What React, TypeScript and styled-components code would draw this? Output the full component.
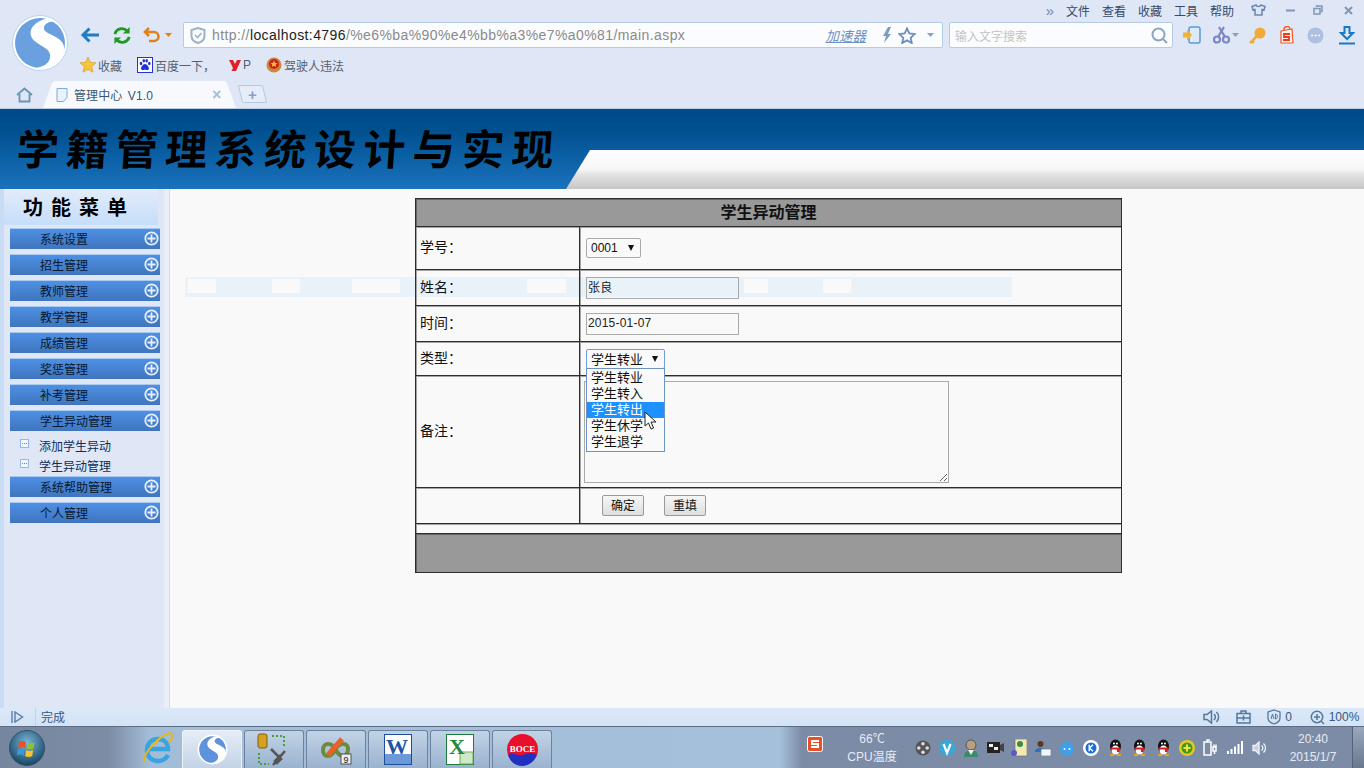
import React from "react";
import styled, { createGlobalStyle } from "styled-components";

const FONT = `"Liberation Sans", "Noto Sans CJK SC", sans-serif`;

const Global = createGlobalStyle`
  html, body { margin: 0; padding: 0; background: #f9f9f9; overflow: hidden; }
  * { box-sizing: border-box; }
  body { font-family: ${FONT}; }
`;

const Page = styled.div`
  width: 1364px; height: 768px; display: flex; flex-direction: column; overflow: hidden;
`;

/* ---------- browser chrome ---------- */
const Chrome = styled.header`
  height: 109px; background: #dfe7f6; display: flex; flex-direction: column; flex: none;
  border-bottom: 1px solid #b9cde8;
`;
const TopMenu = styled.div`
  height: 20px; display: flex; justify-content: flex-end; align-items: center; flex: none;
`;
const TopItem = styled.div<{ $w: number }>`
  width: ${(p) => p.$w}px; display: flex; justify-content: center; align-items: center;
  font-size: 12px; color: #36486a; height: 20px;
`;
const Chevrons = styled(TopItem)` font-size: 15px; color: #6d88ad; `;
const HeadRow = styled.div`
  display: flex; height: 60px; flex: none;
`;
const LogoCol = styled.div`
  width: 76px; padding-left: 12px; margin-top: -5px; flex: none;
`;
const HeadMain = styled.div`
  flex: 1; display: flex; flex-direction: column;
`;
const Toolbar = styled.div`
  height: 30px; display: flex; align-items: center; padding-left: 4px;
`;
const NavSlot = styled.div<{ $w: number; $ml?: number }>`
  width: ${(p) => p.$w}px; margin-left: ${(p) => p.$ml ?? 0}px; display: flex;
  justify-content: center; align-items: center; flex: none;
`;
const Address = styled.div`
  width: 760px; height: 26px; margin-left: 11px; background: #fbfcfe; border: 1px solid #b6cae3;
  border-radius: 2px; display: flex; align-items: center; padding-left: 6px; flex: none;
`;
const Url = styled.div`
  margin-left: 6px; font-size: 14px; color: #8a8a8a; white-space: nowrap; flex: 1;
  font-family: "Liberation Sans", sans-serif; letter-spacing: 0.41px;
`;
const UrlHost = styled.span` color: #222; `;
const Accel = styled.span`
  font-size: 13.5px; font-style: italic; color: #6f92c4; text-decoration: underline;
  text-decoration-thickness: 1px; margin-right: 12px;
`;
const Search = styled.div`
  width: 224px; height: 26px; margin-left: 6px; background: #fbfcfe; border: 1px solid #b6cae3;
  border-radius: 2px; display: flex; align-items: center; padding: 0 4px 0 5px; flex: none;
  justify-content: space-between; font-size: 12px; color: #c4c4c4;
`;
const Bookmarks = styled.div`
  height: 30px; display: flex; align-items: center; padding-left: 4px;
`;
const Bookmark = styled.div<{ $ml?: number }>`
  display: flex; align-items: center; gap: 2px; margin-left: ${(p) => p.$ml ?? 0}px;
  font-size: 12px; color: #556070; white-space: nowrap;
`;
const TabsRow = styled.div`
  height: 28px; display: flex; align-items: flex-end; flex: none;
`;
const HomeSlot = styled.div`
  width: 36px; margin-left: 6px; height: 26px; display: flex; align-items: center; justify-content: center; flex: none;
`;
const Tab = styled.div`
  width: 193px; height: 27px; margin-left: 1px; background: #f7f9fd; display: flex; align-items: center;
  clip-path: polygon(0 100%, 9px 2px, 11px 0, calc(100% - 11px) 0, calc(100% - 9px) 2px, 100% 100%);
  padding-left: 13px; font-size: 12px; color: #3a5674; flex: none;
`;
const TabTitle = styled.span` margin-left: 6px; flex: 1; word-spacing: 2px; letter-spacing: 0.1px; `;
const TabClose = styled.span`
  width: 24px; font-size: 16px; font-weight: bold; color: #a9bdd6; line-height: 1; font-family: "Liberation Sans", sans-serif;
`;
const NewTab = styled.div`
  width: 25px; height: 18px; margin: 0 0 5px 4px; border: 1px solid #b5c8e2; background: #e6edf9;
  transform: skewX(14deg); display: flex; align-items: center; justify-content: center;
  color: #86a0c6; font-size: 15px; font-weight: bold; line-height: 1; font-family: "Liberation Sans", sans-serif;
  border-radius: 2px;
`;
const NewTabPlus = styled.span` transform: skewX(-14deg); `;

/* ---------- banner ---------- */
const Banner = styled.div`
  position: relative; height: 80px; flex: none; display: flex; align-items: center; padding: 0 0 5px 17px;
  background: linear-gradient(#004a8a 0%, #00508f 25%, #1a72bd 100%);
  border-top: 1px solid #0e4f84;
`;
const BannerSweep = styled.div`
  position: absolute; left: 566px; right: 0; top: 40px; bottom: 0;
  background: linear-gradient(#ffffff, #f6f6f6 50%, #e4e4e4 62%, #c6c6c6 100%);
  clip-path: polygon(24px 0, 100% 0, 100% 100%, 0 100%);
`;
const BannerTitle = styled.h1`
  margin: 0; font-family: "Noto Sans CJK SC", sans-serif; font-weight: 700; font-size: 42px; line-height: 1;
  color: #000; letter-spacing: 7.5px; transform: skewX(-4deg); white-space: nowrap;
`;

/* ---------- body ---------- */
const Body = styled.div`
  flex: 1; display: flex; min-height: 0;
`;
const Sidebar = styled.nav`
  width: 170px; flex: none; display: flex; flex-direction: column;
  background: linear-gradient(90deg, #c8dcf4 0 4px, #dfe7f6 4px 164px, #e9effa 164px 169px, #d4dce8 169px 170px);
`;
const MenuTitle = styled.div`
  height: 36px; width: 154px; margin-left: 4px; flex: none; display: flex; align-items: center; padding: 0 0 2px 19px;
  background: linear-gradient(#e3ecf9, #c5def9);
  font-family: "Noto Sans CJK SC", sans-serif; font-weight: 700; font-size: 20px; color: #000; letter-spacing: 8px;
`;
const MenuList = styled.div`
  padding: 3px 0 0 10px; display: flex; flex-direction: column; gap: 5px;
`;
const MenuItem = styled.div`
  width: 150px; height: 21px; padding: 0 1px 2px 30px; display: flex; align-items: center; justify-content: space-between;
  font-size: 12px; color: #08172e; border-top: 1px solid #a9c9f0;
  background: linear-gradient(#4e90e4, #3e75bd);
`;
const SubList = styled.div`
  margin: -5px 0; padding-top: 5px; display: flex; flex-direction: column;
`;
const SubItem = styled.div`
  height: 20px; display: flex; align-items: center; padding: 0 0 2px 10px; gap: 10px; font-size: 12px; color: #0c2c5c;
`;
const SubIcon = styled.span`
  width: 9px; height: 9px; border: 1px solid #8fbbee; background: #f3f8ff; display: block; position: relative; flex: none;
  margin-top: -3px;
  &::after { content: ""; position: absolute; left: 1px; right: 1px; top: 3px; border-top: 1px dotted #3d8be0; }
`;

const Main = styled.main`
  flex: 1; position: relative; background: #f9f9f9; padding: 9px 0 0 245px;
`;
const Ghost = styled.div`
  position: absolute; left: 15px; top: 88px; width: 827px; height: 20px; background: #e9f1f9; display: flex;
`;
const GhostPart = styled.span<{ $w: number; $gap?: boolean }>`
  width: ${(p) => p.$w}px; height: 14px; margin-top: 2px; flex: none;
  background: ${(p) => (p.$gap ? "#f9f9f9" : "transparent")};
`;
const FormTable = styled.table`
  position: relative; width: 707px; border-collapse: collapse; table-layout: fixed; font-size: 14px; color: #111;
`;
const LabelCol = styled.col` width: 164px; `;
const Row = styled.tr<{ $h: number }>` height: ${(p) => p.$h}px; `;
const Cell = styled.td`
  border: 1px solid #2e2e2e; box-shadow: inset 1px 1px 0 #a4a4a4; padding: 0;
`;
const Label = styled(Cell)`
  padding: 0 0 4px 4px; vertical-align: middle;
`;
const Value = styled(Cell)`
  padding: 0 0 0 6px; vertical-align: middle; position: relative;
`;
const HeadCell = styled(Cell)`
  background: #999; text-align: center; font-weight: bold; font-size: 16px; padding-bottom: 3px;
  box-shadow: inset 1px 1px 0 #666;
`;
const FootCell = styled(Cell)`
  background: #999; box-shadow: inset 1px 1px 0 #666;
`;
const SelectBox = styled.div<{ $w: number; $focus?: boolean }>`
  width: ${(p) => p.$w}px; height: 20px; border: 1px solid ${(p) => (p.$focus ? "#6f9fd8" : "#aaa")}; border-radius: 2px;
  background: #f9f9f9; display: flex; align-items: center; justify-content: space-between; padding: 0 6px 0 4px;
  font-size: 12px; color: #111;
`;
const SelectCjk = styled(SelectBox)` font-size: 13px; `;
const Arrow = styled.span`
  width: 0; height: 0; border-left: 3.5px solid transparent; border-right: 3.5px solid transparent; border-top: 6px solid #111;
`;
const TextInput = styled.input`
  display: block; width: 153px; height: 22px; border: 1px solid #aaa; background: transparent; padding: 0 1px 2px;
  font-family: ${FONT}; font-size: 12px; color: #222; outline: none; letter-spacing: 0.2px;
`;
const Note = styled.textarea`
  display: block; width: 365px; height: 102px; border: 1px solid #aaa; background: #f9f9f9; margin-left: -2px;
  outline: none; padding: 2px;
`;
const Actions = styled.div`
  display: flex; gap: 20px; padding-left: 16px;
`;
const Btn = styled.button`
  width: 42px; height: 21px; padding: 0 0 2px; border: 1px solid #999; border-radius: 2px; font-family: ${FONT}; font-size: 12px; color: #111;
  background: linear-gradient(#f6f6f6, #dedede);
`;
const DropList = styled.div`
  position: absolute; left: 6px; top: 26px; width: 79px; z-index: 3; border: 1px solid #6d93c2; background: #f9f9f9;
  padding: 1px 0; display: flex; flex-direction: column;
`;
const DropItem = styled.div<{ $on?: boolean }>`
  height: 16px; line-height: 15px; padding-left: 4px; font-size: 13px;
  background: ${(p) => (p.$on ? "#1e90ff" : "transparent")}; color: ${(p) => (p.$on ? "#fff" : "#111")};
`;
const CursorWrap = styled.div`
  position: absolute; left: 57px; top: 42px; z-index: 4; line-height: 0;
`;

/* ---------- status & taskbar ---------- */
const Status = styled.div`
  height: 18px; flex: none; background: linear-gradient(#dbe8f8, #d3e3f5); display: flex; align-items: center; font-size: 12px; color: #34597f;
`;
const StatusPlay = styled.div`
  width: 36px; height: 18px; display: flex; align-items: center; justify-content: center; border-right: 1px solid #c2d4ea; flex: none;
`;
const StatusText = styled.div` margin-left: 5px; flex: 1; padding-bottom: 1px; `;
const StatusTool = styled.div<{ $w: number }>`
  width: ${(p) => p.$w}px; display: flex; align-items: center; justify-content: center; gap: 4px; flex: none; white-space: nowrap;
`;
const Taskbar = styled.footer`
  height: 42px; flex: none; display: flex; align-items: stretch; border-top: 1px solid #5d6d84;
  background: linear-gradient(90deg, #76869f 0, #7d8da6 110px, #a3bdd8 150px, #a5c0da 780px, #7c8ba6 802px, #7c8ba6 100%);
`;
const Orb = styled.div`
  width: 130px; display: flex; align-items: center; padding-left: 9px; flex: none;
`;
const IeSlot = styled.div`
  width: 52px; display: flex; align-items: center; justify-content: center; flex: none; padding-left: 4px;
`;
const TaskBtns = styled.div`
  display: flex; gap: 2px; padding-top: 3px; flex: none;
`;
const TaskBtn = styled.div<{ $on?: boolean }>`
  width: 60px; border: 1px solid ${(p) => (p.$on ? "#eef3fa" : "#6d829e")}; border-bottom: none; border-radius: 3px 3px 0 0;
  background: ${(p) => (p.$on ? "linear-gradient(#e5edf7, #c3d3e6)" : "linear-gradient(#c2d3e6, #99b3cf)")};
  display: flex; align-items: center; justify-content: center;
`;
const ImeSlot = styled.div`
  margin-left: 250px; width: 26px; display: flex; align-items: center; justify-content: center; flex: none; padding-bottom: 8px;
`;
const Temp = styled.div`
  width: 88px; display: flex; flex-direction: column; align-items: center; justify-content: center;
  font-size: 12px; color: #e6ecf4; line-height: 18px; flex: none;
`;
const Tray = styled.div`
  display: flex; align-items: center; margin-left: -5px; flex: none;
`;
const TrayItem = styled.div`
  width: 24px; display: flex; align-items: center; justify-content: center; flex: none;
`;
const Clock = styled.div`
  width: 78px; margin-left: 3px; display: flex; flex-direction: column; align-items: center; justify-content: center;
  font-size: 12px; color: #e6ecf4; line-height: 18px; flex: none;
`;
const ShowDesk = styled.div`
  flex: 1; background: linear-gradient(#9aa8bd, #69788f); border-left: 1px solid #55637a;
`;

/* ---------- drawings ---------- */
const Logo = () => (
  <svg width="56" height="56" viewBox="0 0 56 56">
    <circle cx="28" cy="28" r="27.5" fill="#fff" stroke="#b9d2f0" />
    <circle cx="28" cy="28" r="25" fill="#6a9fe0" />
    <path d="M38 3C24 5 15 14 20 23C25 31 40 32 38 43C37 49 30 52 24 53C40 56 53 45 52 32C51 20 30 20 32 12C33 8 38 6 44 7Z" fill="#fff" />
  </svg>
);
const Back = () => (
  <svg width="20" height="18" viewBox="0 0 20 18" fill="none" stroke="#1f7dc4" strokeWidth="3">
    <path d="M19 9H3M9.5 2.5L3 9l6.5 6.5" />
  </svg>
);
const Reload = () => (
  <svg width="21" height="21" viewBox="0 0 21 21" fill="none" stroke="#1f9a1f" strokeWidth="3">
    <path d="M3 9a7.5 7.5 0 0 1 13-3" /><path d="M18 12a7.5 7.5 0 0 1-13 3" />
    <path d="M18.5 1.5v7h-7z" fill="#1f9a1f" stroke="none" /><path d="M2.5 19.5v-7h7z" fill="#1f9a1f" stroke="none" />
  </svg>
);
const Undo = () => (
  <svg width="18" height="18" viewBox="0 0 18 18" fill="none" stroke="#e08214" strokeWidth="2.6">
    <path d="M6 2L2 6l4 4" /><path d="M2 6h9a4.5 4.5 0 0 1 0 9H6" />
  </svg>
);
const Caret = ({ c = "#8aa0c0" }: { c?: string }) => (
  <svg width="7" height="4" viewBox="0 0 7 4"><path d="M0 0h7L3.5 4z" fill={c} /></svg>
);
const Shield = () => (
  <svg width="16" height="17" viewBox="0 0 16 17" fill="none">
    <path d="M8 1l6.5 2v6c0 3.5-3 6-6.5 7-3.5-1-6.5-3.5-6.5-7V3z" stroke="#9db2c8" strokeWidth="2" />
    <path d="M5 8l2.5 2.5L11.5 6" stroke="#9db2c8" strokeWidth="1.6" />
  </svg>
);
const Bolt = () => (
  <svg width="10" height="16" viewBox="0 0 10 16"><path d="M6 0L1 9h3L2 16l7-9H6l3-7z" fill="#7f9cc4" /></svg>
);
const StarOut = () => (
  <svg width="18" height="17" viewBox="0 0 18 17"><path d="M9 1.5l2.3 5 5.4.6-4 3.7 1.1 5.3L9 13.4l-4.8 2.7 1.1-5.3-4-3.7 5.4-.6z" fill="none" stroke="#6d8fbf" strokeWidth="1.8" /></svg>
);
const Magnifier = () => (
  <svg width="17" height="17" viewBox="0 0 17 17" fill="none" stroke="#8aa6c6" strokeWidth="2"><circle cx="7.5" cy="7.5" r="6" /><path d="M12 12l4 4" /></svg>
);
const PhoneIn = () => (
  <svg width="18" height="18" viewBox="0 0 18 18">
    <rect x="6" y="1" width="11" height="16" rx="2" fill="#dbe9f8" stroke="#5b9bd8" strokeWidth="1.5" />
    <path d="M0 6.5h4V3.5l5 5.5-5 5.5V11.5H0z" fill="#f2b233" />
  </svg>
);
const Scissors = () => (
  <svg width="17" height="18" viewBox="0 0 17 18" fill="none" stroke="#7f86c4" strokeWidth="2.2">
    <circle cx="4" cy="13.5" r="3" /><circle cx="13" cy="13.5" r="3" /><path d="M5 11L11 1M12 11L6 1" />
  </svg>
);
const Key = () => (
  <svg width="17" height="17" viewBox="0 0 17 17">
    <circle cx="11" cy="6" r="5.5" fill="#f0aa35" /><path d="M8 9l-7 7M3 14l2 2" stroke="#f0aa35" strokeWidth="2.5" />
  </svg>
);
const Bag = () => (
  <svg width="15" height="18" viewBox="0 0 15 18">
    <path d="M2 5l11-2 1 14H2z" fill="#fdf3ee" stroke="#ee5a28" strokeWidth="1.2" />
    <path d="M5 4a3 3 0 0 1 6-1" fill="none" stroke="#ee5a28" strokeWidth="1.3" />
    <path d="M11 8H5v3h5v3H4" fill="none" stroke="#ee3a18" strokeWidth="1.8" />
  </svg>
);
const Dots = () => (
  <svg width="17" height="17" viewBox="0 0 17 17">
    <circle cx="8.5" cy="8.5" r="8" fill="#aebfe0" /><circle cx="5" cy="8.5" r="1" fill="#fff" /><circle cx="8.5" cy="8.5" r="1" fill="#fff" /><circle cx="12" cy="8.5" r="1" fill="#fff" />
  </svg>
);
const Download = () => (
  <svg width="16" height="19" viewBox="0 0 16 19" fill="none" stroke="#1a78c8" strokeWidth="2">
    <path d="M5.5 1h5v6h3.5L8 13 2 7h3.5z" /><path d="M0 17.5h16" />
  </svg>
);
const Shirt = () => (
  <svg width="15" height="12" viewBox="0 0 15 12" fill="none" stroke="#6d88ad" strokeWidth="1.5">
    <path d="M5 1L1 2.5 2 6l2-.5V11h7V5.5l2 .5 1-3.5L10 1c-.5 2-4.5 2-5 0z" />
  </svg>
);
const WinMin = () => <svg width="9" height="3" viewBox="0 0 9 3"><path d="M0 1.5h9" stroke="#7f97b8" strokeWidth="2" /></svg>;
const WinMax = () => (
  <svg width="10" height="10" viewBox="0 0 10 10" fill="none" stroke="#7f97b8" strokeWidth="1.5">
    <rect x="1" y="3.5" width="6" height="5.5" /><path d="M3.5 2V1H9v5.5H8" />
  </svg>
);
const WinClose = () => <svg width="9" height="9" viewBox="0 0 9 9"><path d="M1 1l7 7M8 1L1 8" stroke="#7f97b8" strokeWidth="2" /></svg>;
const StarFill = () => (
  <svg width="16" height="16" viewBox="0 0 16 16"><path d="M8 0l2.4 5.2 5.6.6-4.2 3.8 1.2 5.6L8 12.4l-5 2.8 1.2-5.6L0 5.8l5.6-.6z" fill="#f6c437" stroke="#d8962a" strokeWidth=".6" /></svg>
);
const Paw = () => (
  <svg width="16" height="16" viewBox="0 0 16 16">
    <rect x=".5" y=".5" width="15" height="15" fill="#fff" stroke="#2232d8" />
    <g fill="#2232d8"><ellipse cx="4" cy="6.5" rx="1.3" ry="1.8" /><ellipse cx="6.8" cy="3.8" rx="1.3" ry="1.8" /><ellipse cx="9.7" cy="3.8" rx="1.3" ry="1.8" /><ellipse cx="12.3" cy="6.5" rx="1.3" ry="1.8" /><path d="M8 7c2 0 4 3 4 4.5S10 13.5 8 12.5C6 13.5 4 13 4 11.5S6 7 8 7z" /></g>
  </svg>
);
const RedY = () => <svg width="12" height="13" viewBox="0 0 12 13"><path d="M0 1h4l2 4 2-4h4L7 12H2.5l1.5-3z" fill="#e0202a" /></svg>;
const Badge = () => (
  <svg width="16" height="16" viewBox="0 0 16 16">
    <circle cx="8" cy="8" r="7.5" fill="#c9893a" /><circle cx="8" cy="7" r="5" fill="#d02020" /><path d="M8 3.5l1 2.5h2.5l-2 1.5.7 2.5L8 8.6 5.8 10l.7-2.5-2-1.5H7z" fill="#f5d040" />
  </svg>
);
const Home = () => (
  <svg width="17" height="16" viewBox="0 0 17 16" fill="none" stroke="#6a93b8" strokeWidth="1.8"><path d="M1 8l7.5-6.5L16 8M3.5 7v7.5h10V7" /></svg>
);
const Doc = () => (
  <svg width="12" height="14" viewBox="0 0 12 14"><path d="M1 .5h10v9l-3.5 4H1z" fill="#eaf2fb" stroke="#7faad6" /></svg>
);
const PlusCircle = () => (
  <svg width="15" height="15" viewBox="0 0 15 15" fill="none" stroke="#e6effb" strokeWidth="1.8"><circle cx="7.5" cy="7.5" r="6.2" /><path d="M7.5 3.5v8M3.5 7.5h8" /></svg>
);
const Cursor = () => (
  <svg width="13" height="19" viewBox="0 0 13 19"><path d="M1 1v14l3.5-3 2.5 6 2.5-1-2.5-6H12z" fill="#fff" stroke="#222" strokeWidth="1" /></svg>
);
const PlayMark = () => (
  <svg width="13" height="12" viewBox="0 0 13 12" fill="none" stroke="#5a7da6" strokeWidth="1.4"><path d="M1 0v12" /><path d="M4 1l7.5 5L4 11z" /></svg>
);
const Speaker = () => (
  <svg width="17" height="14" viewBox="0 0 17 14" fill="none" stroke="#52789f" strokeWidth="1.5"><path d="M1 4.5h3L8.5 1v12L4 9.5H1z" /><path d="M11 4a4 4 0 0 1 0 6M13.5 2a7 7 0 0 1 0 10" /></svg>
);
const Kit = () => (
  <svg width="15" height="14" viewBox="0 0 15 14" fill="none" stroke="#52789f" strokeWidth="1.5"><rect x="1" y="3.5" width="13" height="9.5" /><path d="M5 3.5V1h5v2.5M7.5 5.5v5M1 8h13" /></svg>
);
const AdShield = () => (
  <svg width="14" height="16" viewBox="0 0 14 16" fill="none" stroke="#52789f" strokeWidth="1.3"><path d="M7 1l6 2v6c0 3-3 5-6 6-3-1-6-3-6-6V3z" /><path d="M4 10l1.5-5L7 10M8.5 5v5c2.5 0 2.5-5 0-5z" strokeWidth="1" /></svg>
);
const ZoomPlus = () => (
  <svg width="15" height="15" viewBox="0 0 15 15" fill="none" stroke="#52789f" strokeWidth="1.5"><circle cx="7" cy="7" r="5.7" /><path d="M7 4v6M4 7h6M11 11l3 3" /></svg>
);
const WinOrb = () => (
  <svg width="36" height="36" viewBox="0 0 36 36">
    <defs><radialGradient id="orbg" cx=".5" cy=".35" r=".7"><stop offset="0" stopColor="#7bb6d8" /><stop offset="1" stopColor="#0c3c58" /></radialGradient></defs>
    <circle cx="18" cy="18" r="17.5" fill="url(#orbg)" stroke="#34516b" />
    <path d="M10 12c3-1.5 5-1 7 0l-1 6c-2-1-4-1.5-7 0z" fill="#e8522a" /><path d="M18.5 12.5c2 1 4 1.5 7 0l-1 6c-3 1.5-5 1-7 0z" fill="#8cc23a" />
    <path d="M8.7 19.5c3-1.5 5-1 7 0l-1 6c-2-1-4-1.5-7 0z" fill="#3a9ad8" /><path d="M17.2 20c2 1 4 1.5 7 0l-1 6c-3 1.5-5 1-7 0z" fill="#f4c232" />
  </svg>
);
const IE = () => (
  <svg width="32" height="34" viewBox="0 0 32 34" fill="none">
    <path d="M6 18h20c0-6-4-10-10-10S5 12 5 19s5 11 11 11c4 0 8-2 10-6" stroke="#38a4e0" strokeWidth="4.5" />
    <path d="M3 31C-1 24 18 4 28 2c3 0 3 5-1 10" stroke="#e6b820" strokeWidth="2" />
  </svg>
);
const Sogou = () => (
  <svg width="31" height="31" viewBox="0 0 56 56">
    <circle cx="28" cy="28" r="27" fill="#fff" /><circle cx="28" cy="28" r="24" fill="#5f92dc" />
    <path d="M38 3C24 5 15 14 20 23C25 31 40 32 38 43C37 49 30 52 24 53C40 56 53 45 52 32C51 20 30 20 32 12C33 8 38 6 44 7Z" fill="#fff" />
  </svg>
);
const DbTools = () => (
  <svg width="34" height="34" viewBox="0 0 34 34" fill="none">
    <rect x="1" y="1" width="9" height="14" rx="2" fill="#d8a020" stroke="#7a5a10" />
    <path d="M15 3h12v12M2 20v11h10" stroke="#4c9a3c" strokeWidth="2" strokeDasharray="2 2" />
    <path d="M14 16l10 10-4 4-2-2 6-6M28 18L16 32" stroke="#555" strokeWidth="2.5" />
  </svg>
);
const Vs = () => (
  <svg width="32" height="30" viewBox="0 0 32 30" fill="none">
    <path d="M3 15c0-8 9-8 13 0s11 8 12 0-9-8-13 0-12 8-12 0z" stroke="#6a8c3c" strokeWidth="4" />
    <path d="M8 20L22 4" stroke="#e8602a" strokeWidth="5" />
    <rect x="21" y="19" width="10" height="10" fill="#eee" stroke="#555" />
    <text x="26" y="28" fontFamily="Liberation Mono, monospace" fontSize="9" fill="#222" textAnchor="middle">9</text>
  </svg>
);
const Word = () => (
  <svg width="29" height="32" viewBox="0 0 29 32">
    <rect x=".5" y=".5" width="27" height="30" fill="#fff" stroke="#1d4d9c" />
    <path d="M1 20h26v10H1z" fill="#6c9ad8" />
    <text x="13" y="20" fontFamily="Liberation Serif, serif" fontWeight="bold" fontSize="22" fill="#1c55ab" textAnchor="middle">W</text>
  </svg>
);
const Excel = () => (
  <svg width="29" height="32" viewBox="0 0 29 32">
    <rect x=".5" y=".5" width="27" height="30" fill="#fff" stroke="#1d7b3c" />
    <path d="M14 18h13v12H14z" fill="#cfe8c8" stroke="#6aaa5c" />
    <text x="11" y="20" fontFamily="Liberation Serif, serif" fontWeight="bold" fontSize="22" fill="#1f8a3c" textAnchor="middle">X</text>
  </svg>
);
const Boce = () => (
  <svg width="31" height="33" viewBox="0 0 31 33">
    <circle cx="15.5" cy="16.5" r="15.5" fill="#e8102a" />
    <path d="M1 22c6-4 10 2 15 0s9-3 14 0c-3 7-9 11-15 11S3 29 1 22z" fill="#2030c0" />
    <text x="15.5" y="19" fontFamily="Liberation Serif, serif" fontWeight="bold" fontSize="9" fill="#fff" textAnchor="middle">BOCE</text>
  </svg>
);
const SogouIme = () => (
  <svg width="16" height="16" viewBox="0 0 16 16">
    <rect x=".5" y=".5" width="15" height="15" rx="2" fill="#e8502a" stroke="#fff" />
    <path d="M12 5H5v3h6v3H4" fill="none" stroke="#fff" strokeWidth="2" />
  </svg>
);
const Reel = () => (
  <svg width="16" height="16" viewBox="0 0 16 16"><circle cx="8" cy="8" r="7.5" fill="#555" /><g fill="#ddd"><circle cx="8" cy="3.8" r="1.8" /><circle cx="8" cy="12.2" r="1.8" /><circle cx="3.8" cy="8" r="1.8" /><circle cx="12.2" cy="8" r="1.8" /></g></svg>
);
const VBall = () => (
  <svg width="16" height="16" viewBox="0 0 16 16"><circle cx="8" cy="8" r="8" fill="#38a8d8" /><path d="M4.5 4l3.5 9 3.5-9" fill="none" stroke="#fff" strokeWidth="2.2" /></svg>
);
const Person = () => (
  <svg width="16" height="18" viewBox="0 0 16 18"><path d="M1 18c0-5 3-7 7-7s7 2 7 7z" fill="#3a8a6c" /><circle cx="8" cy="6" r="5" fill="#b8a080" stroke="#555" /><path d="M5 11h6l-3 5z" fill="#eee" /></svg>
);
const Cam = () => (
  <svg width="17" height="13" viewBox="0 0 17 13"><rect x="0" y="1" width="13" height="11" fill="#222" /><rect x="2" y="3" width="4" height="3" fill="#eee" /><rect x="7" y="6" width="4" height="3" fill="#eee" /><path d="M13 4l4-2v9l-4-2z" fill="#444" /></svg>
);
const Note3 = () => (
  <svg width="16" height="18" viewBox="0 0 16 18"><rect x="4" y="0" width="12" height="17" fill="#f3e9b0" stroke="#666" strokeWidth=".6" /><circle cx="9" cy="5" r="3" fill="#3a8a4c" /><circle cx="3" cy="14" r="3" fill="#5a5ac8" /></svg>
);
const Contact = () => (
  <svg width="16" height="16" viewBox="0 0 16 16"><circle cx="5.5" cy="4" r="3" fill="#5a3a20" /><path d="M0 12c0-3 2-4 5.5-4S9 9 9 11v1z" fill="#2a70c0" /><rect x="6" y="9" width="10" height="7" fill="#f2f6fb" stroke="#678" strokeWidth=".7" /></svg>
);
const Drop = () => (
  <svg width="16" height="16" viewBox="0 0 16 16"><circle cx="8" cy="9" r="7" fill="#3ea0e8" /><path d="M8 0l2 3H6z" fill="#3ea0e8" /><circle cx="5.5" cy="9" r="1" fill="#fff" /><circle cx="10.5" cy="9" r="1" fill="#fff" /></svg>
);
const KBall = () => (
  <svg width="16" height="16" viewBox="0 0 16 16"><circle cx="8" cy="8" r="8" fill="#fff" /><circle cx="8" cy="8" r="5.5" fill="#1a70d0" /><path d="M6.2 4.8v6.4M10 4.8L6.5 8l3.5 3.2" fill="none" stroke="#fff" strokeWidth="1.4" /></svg>
);
const Penguin = () => (
  <svg width="15" height="17" viewBox="0 0 15 17"><ellipse cx="7.5" cy="7.5" rx="5.5" ry="7" fill="#111" /><ellipse cx="7.5" cy="11" rx="4" ry="4.5" fill="#fff" /><path d="M2.5 8.5h10v2h-10z" fill="#e01818" /><path d="M9 10h2.5v3H9z" fill="#e01818" /><path d="M2 15h4v2H2zM9 15h4v2H9z" fill="#f0a020" /><circle cx="6" cy="4.5" r="1" fill="#fff" /><circle cx="9" cy="4.5" r="1" fill="#fff" /></svg>
);
const GreenPlus = () => (
  <svg width="16" height="16" viewBox="0 0 16 16"><circle cx="8" cy="8" r="8" fill="#e8c820" /><circle cx="8" cy="8" r="5.5" fill="#3a9a20" /><path d="M8 4.5v7M4.5 8h7" stroke="#ffe040" strokeWidth="2" /></svg>
);
const Plug = () => (
  <svg width="16" height="17" viewBox="0 0 16 17" fill="none" stroke="#fff" strokeWidth="1.5"><path d="M1 3h7v13H1zM4 3V1h3" /><path d="M10 8h3v4h-3zM11 8V5.5M13 8V5.5M11.5 12v3" /></svg>
);
const Signal = () => (
  <svg width="16" height="13" viewBox="0 0 16 13" fill="#fff"><rect x="0" y="10" width="2" height="3" /><rect x="3.5" y="8" width="2" height="5" /><rect x="7" y="5.5" width="2" height="7.5" /><rect x="10.5" y="3" width="2" height="10" /><rect x="14" y="0" width="2" height="13" /></svg>
);
const TraySpeaker = () => (
  <svg width="15" height="14" viewBox="0 0 15 14" fill="none" stroke="#eef2f8" strokeWidth="1.3"><path d="M1 4.5h2.5L7 1v12L3.5 9.5H1z" fill="#c8d0de" /><path d="M9.5 4.5a3 3 0 0 1 0 5M11.5 2.5a6 6 0 0 1 0 9" /></svg>
);

/* ---------- data ---------- */
const beforeActive = ["系统设置", "招生管理", "教师管理", "教学管理", "成绩管理", "奖惩管理", "补考管理", "学生异动管理"];
const afterActive = ["系统帮助管理", "个人管理"];
const subItems = ["添加学生异动", "学生异动管理"];
const kinds = ["学生转业", "学生转入", "学生转出", "学生休学", "学生退学"];
const ghost: [number, boolean][] = [[3, false], [28, true], [56, false], [28, true], [52, false], [48, true], [127, false], [39, true], [178, false], [24, true], [55, false], [28, true], [161, false]];
const tray = [Reel, VBall, Person, Cam, Note3, Contact, Drop, KBall, Penguin, Penguin, Penguin, GreenPlus, Plug, Signal, TraySpeaker];
const taskIcons = [Sogou, DbTools, Vs, Word, Excel, Boce];

export default function App() {
  return (
    <Page>
      <Global />
      <Chrome>
        <TopMenu>
          <Chevrons $w={20}>»</Chevrons>
          {["文件", "查看", "收藏", "工具", "帮助"].map((t) => <TopItem key={t} $w={36}>{t}</TopItem>)}
          <TopItem $w={36}><Shirt /></TopItem>
          <TopItem $w={28}><WinMin /></TopItem>
          <TopItem $w={28}><WinMax /></TopItem>
          <TopItem $w={32}><WinClose /></TopItem>
        </TopMenu>
        <HeadRow>
          <LogoCol><Logo /></LogoCol>
          <HeadMain>
            <Toolbar>
              <NavSlot $w={20}><Back /></NavSlot>
              <NavSlot $w={20} $ml={12}><Reload /></NavSlot>
              <NavSlot $w={18} $ml={11}><Undo /></NavSlot>
              <NavSlot $w={7} $ml={4}><Caret c="#e08214" /></NavSlot>
              <Address>
                <Shield />
                <Url>http://<UrlHost>localhost:4796</UrlHost>/%e6%ba%90%e4%bb%a3%e7%a0%81/main.aspx</Url>
                <Accel>加速器</Accel>
                <NavSlot $w={10} $ml={4}><Bolt /></NavSlot>
                <NavSlot $w={18} $ml={6}><StarOut /></NavSlot>
                <NavSlot $w={7} $ml={11}><Caret /></NavSlot>
                <NavSlot $w={8} />
              </Address>
              <Search>
                <span>输入文字搜索</span>
                <Magnifier />
              </Search>
              <NavSlot $w={24} $ml={7}><PhoneIn /></NavSlot>
              <NavSlot $w={20} $ml={7}><Scissors /></NavSlot>
              <NavSlot $w={7} $ml={1}><Caret /></NavSlot>
              <NavSlot $w={24} $ml={6}><Key /></NavSlot>
              <NavSlot $w={24} $ml={5}><Bag /></NavSlot>
              <NavSlot $w={24} $ml={5}><Dots /></NavSlot>
              <NavSlot $w={24} $ml={8}><Download /></NavSlot>
            </Toolbar>
            <Bookmarks>
              <Bookmark><StarFill />收藏</Bookmark>
              <Bookmark $ml={15}><Paw />百度一下，</Bookmark>
              <Bookmark $ml={14}><RedY />P</Bookmark>
              <Bookmark $ml={15}><Badge />驾驶人违法</Bookmark>
            </Bookmarks>
          </HeadMain>
        </HeadRow>
        <TabsRow>
          <HomeSlot><Home /></HomeSlot>
          <Tab>
            <Doc />
            <TabTitle>管理中心 V1.0</TabTitle>
            <TabClose>×</TabClose>
          </Tab>
          <NewTab><NewTabPlus>+</NewTabPlus></NewTab>
        </TabsRow>
      </Chrome>
      <Banner>
        <BannerSweep />
        <BannerTitle>学籍管理系统设计与实现</BannerTitle>
      </Banner>
      <Body>
        <Sidebar>
          <MenuTitle>功能菜单</MenuTitle>
          <MenuList>
            {beforeActive.map((t) => <MenuItem key={t}>{t}<PlusCircle /></MenuItem>)}
            <SubList>
              {subItems.map((t) => <SubItem key={t}><SubIcon />{t}</SubItem>)}
            </SubList>
            {afterActive.map((t) => <MenuItem key={t}>{t}<PlusCircle /></MenuItem>)}
          </MenuList>
        </Sidebar>
        <Main>
          <Ghost>
            {ghost.map(([w, g], i) => <GhostPart key={i} $w={w} $gap={g} />)}
          </Ghost>
          <FormTable>
            <colgroup>
              <LabelCol />
              <col />
            </colgroup>
            <tbody>
              <Row $h={28}><HeadCell colSpan={2}>学生异动管理</HeadCell></Row>
              <Row $h={43}>
                <Label>学号：</Label>
                <Value><SelectBox $w={55}>0001<Arrow /></SelectBox></Value>
              </Row>
              <Row $h={36}>
                <Label>姓名：</Label>
                <Value><TextInput readOnly value="张良" /></Value>
              </Row>
              <Row $h={36}>
                <Label>时间：</Label>
                <Value><TextInput readOnly value="2015-01-07" /></Value>
              </Row>
              <Row $h={34}>
                <Label>类型：</Label>
                <Value>
                  <SelectCjk $w={79} $focus>学生转业<Arrow /></SelectCjk>
                  <DropList>
                    {kinds.map((k, i) => <DropItem key={k} $on={i === 2}>{k}</DropItem>)}
                    <CursorWrap><Cursor /></CursorWrap>
                  </DropList>
                </Value>
              </Row>
              <Row $h={112}>
                <Label>备注：</Label>
                <Value><Note readOnly /></Value>
              </Row>
              <Row $h={36}>
                <Label />
                <Value>
                  <Actions>
                    <Btn type="button">确定</Btn>
                    <Btn type="button">重填</Btn>
                  </Actions>
                </Value>
              </Row>
              <Row $h={10}><Cell colSpan={2} /></Row>
              <Row $h={39}><FootCell colSpan={2} /></Row>
            </tbody>
          </FormTable>
        </Main>
      </Body>
      <Status>
        <StatusPlay><PlayMark /></StatusPlay>
        <StatusText>完成</StatusText>
        <StatusTool $w={32}><Speaker /></StatusTool>
        <StatusTool $w={32}><Kit /></StatusTool>
        <StatusTool $w={41}><AdShield />0</StatusTool>
        <StatusTool $w={9} />
        <StatusTool $w={51}><ZoomPlus />100%</StatusTool>
        <StatusTool $w={4} />
      </Status>
      <Taskbar>
        <Orb><WinOrb /></Orb>
        <IeSlot><IE /></IeSlot>
        <TaskBtns>
          {taskIcons.map((Icon, i) => <TaskBtn key={i} $on={i === 0}><Icon /></TaskBtn>)}
        </TaskBtns>
        <ImeSlot><SogouIme /></ImeSlot>
        <Temp><span>66℃</span><span>CPU温度</span></Temp>
        <Tray>
          {tray.map((Icon, i) => <TrayItem key={i}><Icon /></TrayItem>)}
        </Tray>
        <Clock><span>20:40</span><span>2015/1/7</span></Clock>
        <ShowDesk />
      </Taskbar>
    </Page>
  );
}
